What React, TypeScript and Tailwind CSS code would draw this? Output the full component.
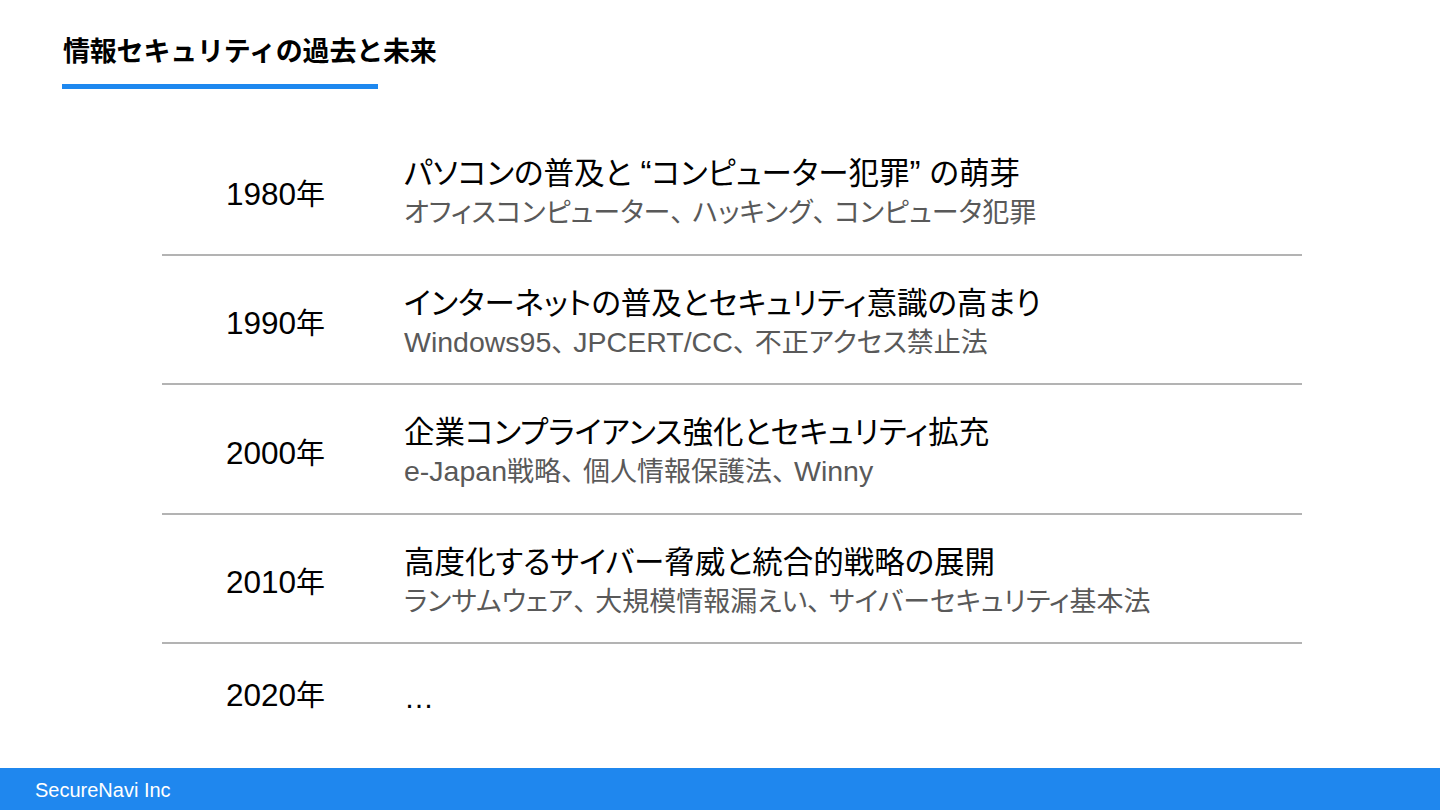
import React from "react";

type Kind = "latin" | "cjk" | "punct";
type Run = { t: string; k: Kind };

function kindOf(ch: string): Kind {
  if (ch === "、") return "punct";
  if (ch.charCodeAt(0) < 0x2000 || ch === "“" || ch === "”") return "latin";
  return "cjk";
}

function splitRuns(s: string): Run[] {
  const out: Run[] = [];
  for (const ch of s) {
    const k = kindOf(ch);
    const last = out[out.length - 1];
    if (last && last.k === k) last.t += ch;
    else out.push({ t: ch, k });
  }
  return out;
}

function Mixed({ text, latinClass }: { text: string; latinClass: string }) {
  return (
    <>
      {splitRuns(text).map((r, i) =>
        r.k === "latin" ? (
          <span key={i} className={latinClass}>
            {r.t}
          </span>
        ) : r.k === "punct" ? (
          <span key={i} className="[font-feature-settings:normal] tracking-[-5px]">
            {r.t}
          </span>
        ) : (
          <span key={i}>{r.t}</span>
        )
      )}
    </>
  );
}

const rows = [
  {
    year: "1980",
    title: "パソコンの普及と “コンピューター犯罪” の萌芽",
    sub: "オフィスコンピューター、ハッキング、コンピュータ犯罪",
  },
  {
    year: "1990",
    title: "インターネットの普及とセキュリティ意識の高まり",
    sub: "Windows95、JPCERT/CC、不正アクセス禁止法",
  },
  {
    year: "2000",
    title: "企業コンプライアンス強化とセキュリティ拡充",
    sub: "e-Japan戦略、個人情報保護法、Winny",
  },
  {
    year: "2010",
    title: "高度化するサイバー脅威と統合的戦略の展開",
    sub: "ランサムウェア、大規模情報漏えい、サイバーセキュリティ基本法",
  },
];

function Year({ y }: { y: string }) {
  return (
    <span className="whitespace-nowrap">
      <span className="text-[31.5px] leading-none">{y}</span>
      <span className="text-[29px] leading-none">年</span>
    </span>
  );
}

export default function App() {
  return (
    <div
      className="w-[1440px] h-[810px] bg-white flex flex-col overflow-hidden text-black"
      style={{ fontFamily: '"Liberation Sans", "Noto Sans CJK JP", sans-serif' }}
    >
      <div className="pt-[34px] pl-[63px]">
        <h1 className="text-[27px] leading-[36px] font-bold tracking-[-0.2px]">
          情報セキュリティの過去と未来
        </h1>
      </div>
      <div className="mt-[14px] ml-[62px] w-[316px] h-[5px] bg-[#1e88ef]" />

      <div className="mt-[37px] ml-[162px] w-[1140px] flex flex-col">
        {rows.map((r) => (
          <div
            key={r.year}
            className="h-[129.5px] border-b-2 border-[#b3b3b3] flex items-center"
          >
            <div className="w-[242px] pl-[64px] pt-[17px] leading-[36px]">
              <Year y={r.year} />
            </div>
            <div className="flex flex-col pt-[4.5px] [font-feature-settings:'palt']">
              <div className="text-[30.5px] leading-[38px] whitespace-nowrap">
                <Mixed text={r.title} latinClass="text-[33px] leading-none" />
              </div>
              <div className="text-[27px] leading-[34px] text-[#595959] mt-[4px] whitespace-nowrap">
                <Mixed text={r.sub} latinClass="text-[28.5px] leading-none" />
              </div>
            </div>
          </div>
        ))}
        <div className="h-[97px] flex items-center pt-[14px]">
          <div className="w-[242px] pl-[64px] leading-[36px]">
            <Year y="2020" />
          </div>
          <div className="text-[30px] leading-[38px] pb-[3px]">…</div>
        </div>
      </div>

      <div className="mt-auto h-[42px] bg-[#1f87ee] flex items-center pl-[35px] pt-[2px]">
        <span className="text-white text-[20px] leading-[24px]">SecureNavi Inc</span>
      </div>
    </div>
  );
}
